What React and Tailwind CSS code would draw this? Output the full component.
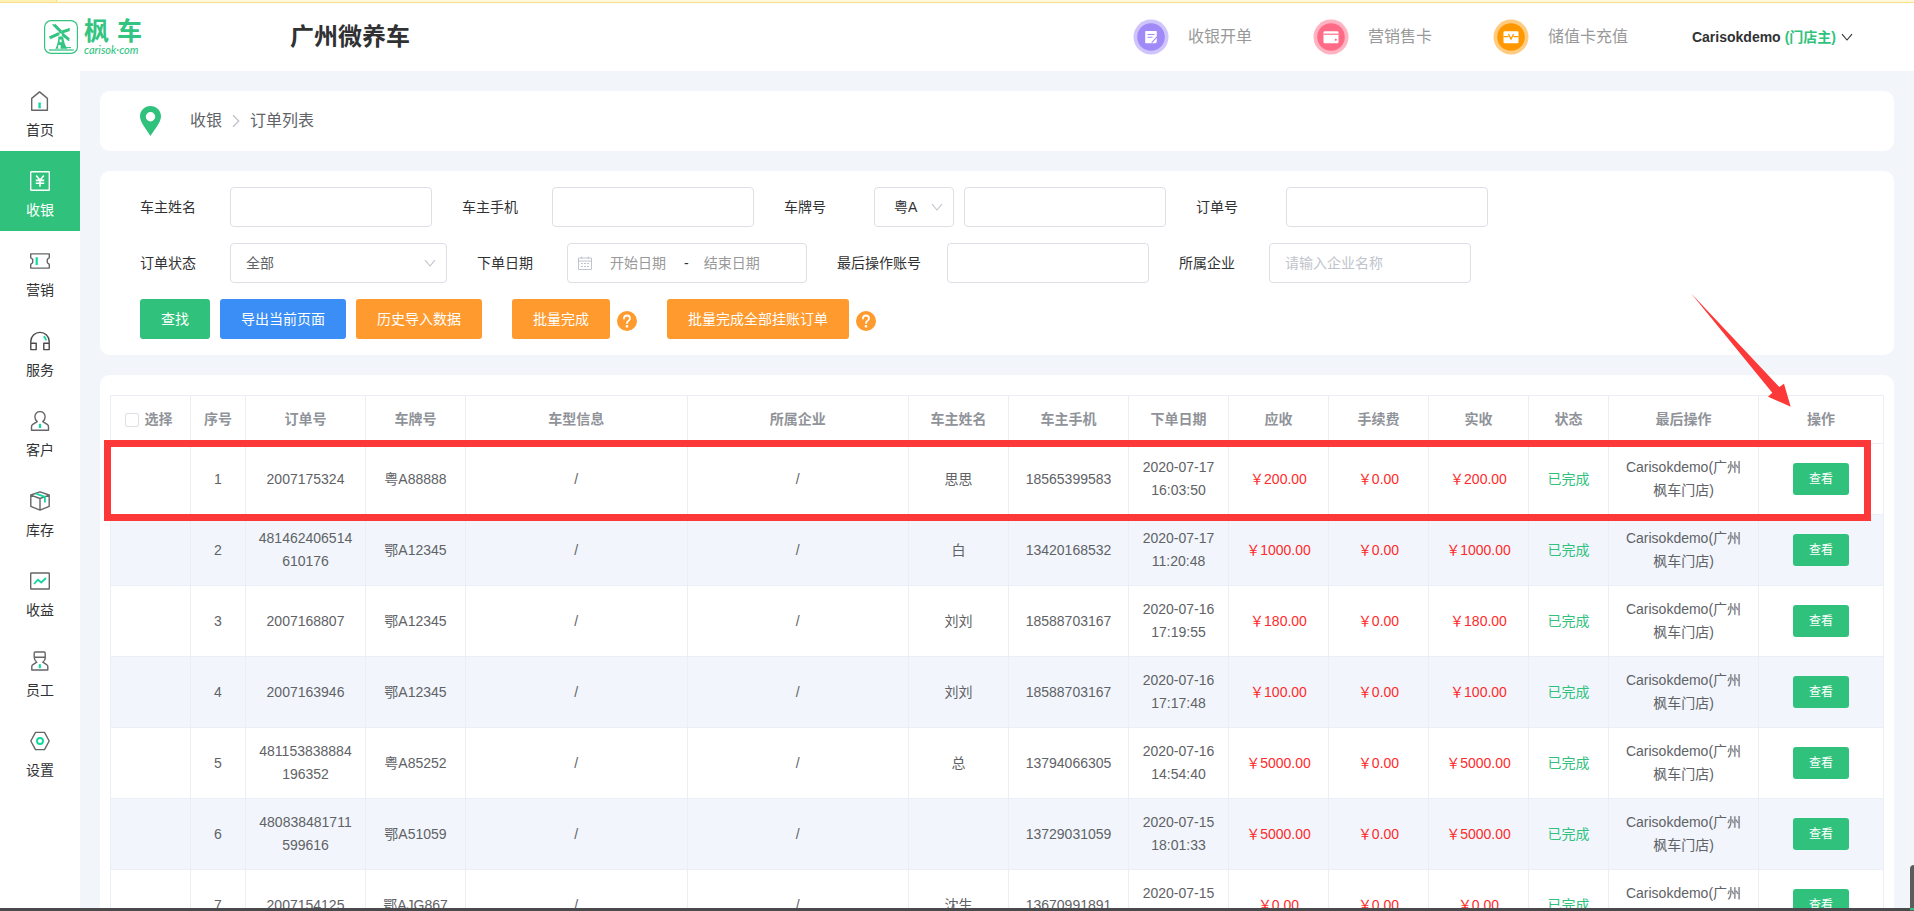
import React from "react";

const NAV = [
  { label: "首页", icon: "home" },
  { label: "收银", icon: "cash", active: true },
  { label: "营销", icon: "ticket" },
  { label: "服务", icon: "headset" },
  { label: "客户", icon: "customer" },
  { label: "库存", icon: "box" },
  { label: "收益", icon: "income" },
  { label: "员工", icon: "staff" },
  { label: "设置", icon: "settings" },
];

const ICONS = {
  home: (
    <>
      <path d="M1.7 19.2V7.4L9.6 .9l7.8 6.5v11.8z" />
      <path d="M9.6 11.5v5.8" stroke="#12d8a0" strokeWidth="2.400" />
    </>
  ),
  cash: (
    <>
      <rect x=".7" y=".7" width="18.6" height="18.6" rx=".6" stroke="#fff" />
      <path d="M6.2 4.6 10 9.2l3.8-4.6M10 9.2v6.6M5.8 9.4h8.4M5.8 12.3h8.4" stroke="#fff" strokeWidth="1.6" />
    </>
  ),
  ticket: (
    <>
      <path d="M.7 2.900h18.600v3.500c-.2 1.200-2 1.200-2 2.200v2.800c0 1 1.800 1 2 2.200v3.500H.7v-3.500c.2-1.200 2-1.200 2-2.200V8.600c0-1-1.800-1-2-2.200z" />
      <path d="M6.7 6.200v7.800" stroke="#12d8a0" strokeWidth="2.200" />
    </>
  ),
  headset: (
    <>
      <path d="M.8 18.6V10.6a9.2 9.2 0 0 1 18.4 0v8M.8 12.2h5.4v6.4H.8zM13.8 12.2h5.4v6.4h-5.4z" stroke="#4a4a4a" />
      <path d="M13.6 5.4c1.4.8 2.1 2 2.5 4" stroke="#12d8a0" strokeWidth="1.8" />
    </>
  ),
  customer: (
    <>
      <path d="M7.2 10.6C5.6 9.300 4.900 7.700 4.900 5.700a5.100 5.100 0 0 1 10.200 0c0 2-.7 3.600-2.300 4.900l4.400 2.800c.9.6 1.300 1.300 1.300 2.300v3.500h-17v-3.500c0-1 .4-1.700 1.300-2.300z" />
      <path d="M10 12.800v4.200" stroke="#12d8a0" strokeWidth="2.200" />
    </>
  ),
  box: (
    <>
      <path d="M10 .9 19.200 4v11.300L10 19.100.8 15.300V4zM.8 4.200 10 7.500l9.200-3.300M10 7.500v11.600" />
      <path d="M6 2.700 14.900 5.900v5.600" stroke="#12d8a0" strokeWidth="1.800" />
    </>
  ),
  income: (
    <>
      <rect x=".7" y="2" width="18.600" height="16" rx=".5" />
      <path d="m4 13 4-4.300 3.200 2.800L16 7" stroke="#12d8a0" strokeWidth="1.800" />
    </>
  ),
  staff: (
    <>
      <path d="M4.200 6.200V2c0-.6.4-1 1-1h9c.6 0 1 .4 1 1v4.200zM4.200 6.200c0 2.200.8 3.600 2.600 5l-3.800 2.400c-.8.5-1.200 1-1.200 2v3.400h16v-3.400c0-1-.4-1.500-1.200-2l-3.800-2.400c1.800-1.400 2.600-2.800 2.600-5" />
      <path d="M9.800 13.200v4" stroke="#12d8a0" strokeWidth="2.200" />
    </>
  ),
  settings: (
    <>
      <path d="M5.500 1.400h9L19.200 10l-4.700 8.600h-9L.8 10z" />
      <circle cx="10" cy="10" r="3" stroke="#12d8a0" strokeWidth="1.900" />
    </>
  ),
};

const ACTIONS = [
  {
    label: "收银开单",
    ring: "#cfc4fb",
    fill: "#9f8af7",
    glyph: (
      <>
        <path d="M13.200 12h9.600c.6 0 1 .4 1 1v9.600c0 .9-.7 1.600-1.600 1.600h-9c-.6 0-1-.4-1-1V13c0-.6.4-1 1-1z" fill="#fff" />
        <path d="M14.500 15.500h7M14.500 18.300h5M24.300 17.600l-5.600 6" stroke="#9f8af7" strokeWidth="1.100" fill="none" />
      </>
    ),
  },
  {
    label: "营销售卡",
    ring: "#ffb3c1",
    fill: "#ff6b87",
    glyph: (
      <>
        <rect x="10.500" y="12.200" width="15" height="12" rx="1.200" fill="#fff" />
        <path d="M10.500 15.200h15" stroke="#ff6b87" strokeWidth="1.200" />
        <circle cx="22.800" cy="20.800" r="1.100" fill="#ff6b87" />
      </>
    ),
  },
  {
    label: "储值卡充值",
    ring: "#ffcb80",
    fill: "#ff9800",
    glyph: (
      <>
        <rect x="10.500" y="12.200" width="15" height="12" rx="1.200" fill="#fff" />
        <path d="M10.500 17.600h5M20.500 17.600h5M15.400 15l2.600 5 2.600-5" stroke="#ff9800" strokeWidth="1.300" fill="none" />
      </>
    ),
  },
];

const COLUMNS = [
  { title: "选择", width: "w-[80px]" },
  { title: "序号", width: "w-[55px]" },
  { title: "订单号", width: "w-[120px]" },
  { title: "车牌号", width: "w-[100px]" },
  { title: "车型信息", width: "" },
  { title: "所属企业", width: "" },
  { title: "车主姓名", width: "w-[100px]" },
  { title: "车主手机", width: "w-[120px]" },
  { title: "下单日期", width: "w-[100px]" },
  { title: "应收", width: "w-[100px]" },
  { title: "手续费", width: "w-[100px]" },
  { title: "实收", width: "w-[100px]" },
  { title: "状态", width: "w-[80px]" },
  { title: "最后操作", width: "w-[150px]" },
  { title: "操作", width: "w-[125px]" },
];

const ORDERS = [
  { no: "2007175324", plate: "粤A88888", owner: "思思", phone: "18565399583", date: "2020-07-17", time: "16:03:50", total: "200.00" },
  { no: "481462406514610176", plate: "鄂A12345", owner: "白", phone: "13420168532", date: "2020-07-17", time: "11:20:48", total: "1000.00" },
  { no: "2007168807", plate: "鄂A12345", owner: "刘刘", phone: "18588703167", date: "2020-07-16", time: "17:19:55", total: "180.00" },
  { no: "2007163946", plate: "鄂A12345", owner: "刘刘", phone: "18588703167", date: "2020-07-16", time: "17:17:48", total: "100.00" },
  { no: "481153838884196352", plate: "粤A85252", owner: "总", phone: "13794066305", date: "2020-07-16", time: "14:54:40", total: "5000.00" },
  { no: "480838481711599616", plate: "鄂A51059", owner: "", phone: "13729031059", date: "2020-07-15", time: "18:01:33", total: "5000.00" },
  { no: "2007154125", plate: "鄂AJG867", owner: "沈生", phone: "13670991891", date: "2020-07-15", time: "17:25:10", total: "0.00" },
];

// Full-width yen sign, as used in Chinese price text
const YEN = "\uFFE5";

const INPUT = "h-10 rounded border border-[#dcdfe6] bg-white px-[15px] text-sm text-[#606266] outline-none placeholder:text-[#c0c4cc]";
const CELL = "border-r border-b border-[#ebeef5] px-3";

function Chevron({ className }) {
  return (
    <svg viewBox="0 0 12 12" className={className} fill="none" stroke="currentColor" strokeWidth="1.100" aria-hidden="true">
      <path d="M1 3.200 6 9l5-5.800" />
    </svg>
  );
}

function Field({ id, label, wide, children }) {
  return (
    <div className="flex items-center">
      <label htmlFor={id} className={wide ? "w-[110px] shrink-0" : "w-[90px] shrink-0"}>
        {label}
      </label>
      {children}
    </div>
  );
}

function Help() {
  return (
    <button type="button" aria-label="帮助" className="mt-1 flex size-5 items-center justify-center rounded-full bg-[#ff9a2e]">
      <svg viewBox="0 0 20 20" className="size-5" fill="none" stroke="#fff" strokeWidth="1.800" strokeLinecap="round">
        <path d="M7 7.600c0-1.800 1.300-3.100 3-3.100s3 1.200 3 2.900c0 2.100-2.900 2.300-3 4.700" />
        <circle cx="10" cy="15.300" r=".5" fill="#fff" />
      </svg>
    </button>
  );
}

function Button({ color, children }) {
  return (
    <button type="button" className={`h-10 rounded-[3px] px-[21px] text-sm text-white ${color}`}>
      {children}
    </button>
  );
}

function Logo() {
  return (
    <a href="#home" className="flex items-center gap-1.5 text-[#33c481]">
      <svg viewBox="0 0 34 34" className="size-[34px]" aria-hidden="true">
        <rect x=".6" y=".6" width="32.800" height="32.800" rx="6.500" fill="none" stroke="currentColor" strokeWidth="1.200" />
        <g fill="none" stroke="currentColor">
          <path d="M8.600 4.200 25.300 20.700M5.300 17.200 26 8.600" strokeWidth="1.200" />
          <path d="M10.200 4.800 17 11.800M5.800 17.800 15 13.600M18 12l7.400-2.400M18.400 14.200l6.600 5.400" strokeWidth="3" />
          <path d="M5 30h24.600" strokeWidth="1.300" />
          <path d="M21.500 27.600h5.500" strokeWidth="1.100" />
        </g>
        <path d="M14.400 16.600h4.800c.3 4 1.800 8.400 4 12.200H11.400c2-3.600 2.900-7.800 3-12.200z" fill="currentColor" />
        <path d="M15.600 19.400h2v2.800h-2zM14.200 25h2.400v3.800h-2.400z" fill="#fff" />
      </svg>
      <span className="flex flex-col">
        <span className="flex gap-2 text-[25px] leading-[26px] font-bold">
          <span>枫</span>
          <span>车</span>
        </span>
        <span className="font-[Lato,sans-serif] text-[11px] leading-3 font-medium italic">carisok·com</span>
      </span>
    </a>
  );
}

function Header() {
  return (
    <header className="flex h-[68px] shrink-0 items-center bg-white pr-[61px] pl-11">
      <div className="w-[246px] shrink-0">
        <Logo />
      </div>
      <h1 className="text-2xl font-bold text-[#303133]">广州微养车</h1>
      <nav className="ml-auto flex items-center gap-[61px]">
        {ACTIONS.map((a) => (
          <a key={a.label} href="#action" className="flex items-center gap-[19px] text-base text-[#999]">
            <svg viewBox="0 0 36 36" className="size-9" aria-hidden="true">
              <circle cx="18" cy="18" r="17.500" fill={a.ring} />
              <circle cx="18" cy="18" r="13.800" fill={a.fill} />
              {a.glyph}
            </svg>
            {a.label}
          </a>
        ))}
      </nav>
      <button type="button" className="ml-16 flex items-center gap-1 text-sm font-bold text-[#303133]">
        Carisokdemo <span className="text-[#30c27c]">(门店主)</span>
        <Chevron className="ml-px size-3" />
      </button>
    </header>
  );
}

function Sidebar() {
  return (
    <nav className="w-20 shrink-0 bg-white">
      {NAV.map((n) => (
        <a
          key={n.label}
          href="#nav"
          className={`flex h-20 flex-col items-center gap-[9px] pt-5 text-sm ${n.active ? "bg-[#30c27c] text-white" : "text-[#303133]"}`}
        >
          <svg viewBox="0 0 20 20" className="size-5" fill="none" stroke="#666" strokeWidth="1.400" strokeLinejoin="round" aria-hidden="true">
            {ICONS[n.icon]}
          </svg>
          {n.label}
        </a>
      ))}
    </nav>
  );
}

function Breadcrumb() {
  return (
    <div className="flex h-[60px] items-center rounded-[10px] bg-white px-10 text-base text-[#606266]">
      <svg viewBox="0 0 22 30" className="mr-7 h-[30px] w-[22px]" aria-hidden="true">
        <path fillRule="evenodd" d="M10.500 0C16.300 0 21 4.600 21 10.300 21 17 14 24 10.500 30 7 24 0 17 0 10.300 0 4.600 4.700 0 10.500 0zm0 6a4.700 4.700 0 1 0 0 9.400 4.700 4.700 0 0 0 0-9.400z" fill="#30c27c" />
      </svg>
      <a href="#cashier">收银</a>
      <svg viewBox="0 0 28 14" className="h-3.5 w-7" fill="none" stroke="#c0c4cc" strokeWidth="1.300" aria-hidden="true">
        <path d="m11 1.200 5.800 5.800L11 12.800" />
      </svg>
      <span>订单列表</span>
    </div>
  );
}

function Filters() {
  return (
    <form className="flex flex-col gap-4 rounded-[10px] bg-white px-10 py-4 text-sm text-[#303133]">
      <div className="flex flex-wrap gap-[30px]">
        <Field id="owner" label="车主姓名">
          <input id="owner" className={`w-[202px] ${INPUT}`} />
        </Field>
        <Field id="phone" label="车主手机">
          <input id="phone" className={`w-[202px] ${INPUT}`} />
        </Field>
        <Field id="plate" label="车牌号">
          <div className="relative mr-2.5">
            <select aria-label="车牌前缀" className="h-10 w-20 appearance-none rounded border border-[#dcdfe6] bg-white pl-[19px] text-sm">
              <option>粤A</option>
            </select>
            <Chevron className="pointer-events-none absolute top-3.5 right-[11px] size-3 text-[#c0c4cc]" />
          </div>
          <input id="plate" className={`w-[202px] ${INPUT}`} />
        </Field>
        <Field id="order" label="订单号">
          <input id="order" className={`w-[202px] ${INPUT}`} />
        </Field>
      </div>
      <div className="flex flex-wrap gap-[30px]">
        <Field id="status" label="订单状态">
          <div className="relative">
            <select id="status" className={`w-[217px] appearance-none ${INPUT}`}>
              <option>全部</option>
            </select>
            <Chevron className="pointer-events-none absolute top-3.5 right-[11px] size-3 text-[#c0c4cc]" />
          </div>
        </Field>
        <Field id="start" label="下单日期">
          <div className="flex h-10 w-[240px] items-center rounded border border-[#dcdfe6] px-2.5">
            <svg viewBox="0 0 14 14" className="size-3.5 shrink-0" fill="none" stroke="#c0c4cc" strokeWidth="1" aria-hidden="true">
              <path d="M.5 2h13v11.500H.5zM.5 5h13M3.700.5v2.500M10.300.5v2.500M3 7.500h2M6 7.500h2M9 7.500h2M3 10.500h2M6 10.500h2M9 10.500h2" />
            </svg>
            <input id="start" placeholder="开始日期" className="w-[92px] text-center outline-none placeholder:text-[#999]" />
            <span>-</span>
            <input aria-label="结束日期" placeholder="结束日期" className="w-[86px] text-center outline-none placeholder:text-[#999]" />
          </div>
        </Field>
        <Field id="account" label="最后操作账号" wide>
          <input id="account" className={`w-[202px] ${INPUT}`} />
        </Field>
        <Field id="company" label="所属企业">
          <input id="company" placeholder="请输入企业名称" className={`w-[202px] ${INPUT}`} />
        </Field>
      </div>
      <div className="flex flex-wrap items-center gap-[30px]">
        <div className="flex gap-2.5">
          <Button color="bg-[#30c27c]">查找</Button>
          <Button color="bg-[#3a8ef6]">导出当前页面</Button>
          <Button color="bg-[#ff9a2e]">历史导入数据</Button>
        </div>
        <div className="flex items-center gap-[7px]">
          <Button color="bg-[#ff9a2e]">批量完成</Button>
          <Help />
        </div>
        <div className="flex items-center gap-[7px]">
          <Button color="bg-[#ff9a2e]">批量完成全部挂账订单</Button>
          <Help />
        </div>
      </div>
    </form>
  );
}

function Orders() {
  return (
    <section className="relative rounded-t-[10px] bg-white px-2.5 pt-5">
      <div className="relative">
        <table className="w-full table-fixed border-separate border-spacing-0 border-t border-l border-[#ebeef5] text-center text-sm leading-[23px] text-[#606266]">
          <thead>
            <tr className="text-[#909399]">
              {COLUMNS.map((c, i) => (
                <th key={c.title} className={`h-12 border-r border-b border-[#ebeef5] font-bold ${c.width}`}>
                  {i === 0 ? (
                    <label className="flex items-center justify-center gap-1.5 pr-1">
                      <input type="checkbox" className="size-3.5 appearance-none rounded-[2px] border border-[#dcdfe6] bg-white" />
                      {c.title}
                    </label>
                  ) : (
                    c.title
                  )}
                </th>
              ))}
            </tr>
          </thead>
          <tbody>
            {ORDERS.map((o, i) => (
              <tr key={o.no} className={`h-[71px] ${i % 2 ? "bg-[#f2f6fc]" : "bg-white"}`}>
                <td className={CELL}></td>
                <td className={CELL}>{i + 1}</td>
                <td className={`${CELL} break-all`}>{o.no}</td>
                <td className={CELL}>{o.plate}</td>
                <td className={CELL}>/</td>
                <td className={CELL}>/</td>
                <td className={CELL}>{o.owner}</td>
                <td className={CELL}>{o.phone}</td>
                <td className={CELL}>
                  {o.date} {o.time}
                </td>
                <td className={`${CELL} text-[#fd2b2b]`}>{YEN + o.total}</td>
                <td className={`${CELL} text-[#fd2b2b]`}>{YEN + "0.00"}</td>
                <td className={`${CELL} text-[#fd2b2b]`}>{YEN + o.total}</td>
                <td className={`${CELL} text-[#30c27c]`}>已完成</td>
                <td className={`${CELL} break-all`}>Carisokdemo(广州枫车门店)</td>
                <td className={CELL}>
                  <button type="button" className="h-8 w-14 rounded-[3px] bg-[#30c27c] align-middle text-xs text-white">
                    查看
                  </button>
                </td>
              </tr>
            ))}
          </tbody>
        </table>
        <div className="pointer-events-none absolute top-[45px] right-[13px] -left-1.5 h-[81px] border-[7px] border-[#fd3838]" />
      </div>
      <svg viewBox="0 0 102 116" className="pointer-events-none absolute -top-[83px] right-[102px] h-[116px] w-[102px]" aria-hidden="true">
        <path d="M1 1.300 89.300 95l4.700-3.300 6.700 23L78 104.700l4.300-4z" fill="#fd3838" />
      </svg>
    </section>
  );
}

export default function App() {
  return (
    <div className="relative flex h-screen flex-col overflow-hidden bg-[#f2f6fb] font-['Liberation_Sans','Noto_Sans_CJK_SC',sans-serif]">
      <div className="flex h-[3px] shrink-0 border-b border-[#fbe08a] bg-[#fff9dc]">
        <div className="w-[57px] border-r border-[#fbe08a] bg-[#fff0b3]" />
      </div>
      <Header />
      <div className="flex min-h-0 flex-1">
        <Sidebar />
        <main className="flex min-w-0 flex-1 flex-col gap-5 overflow-hidden px-5 pt-5 *:shrink-0">
          <Breadcrumb />
          <Filters />
          <Orders />
        </main>
      </div>
      <div className="h-[3px] shrink-0 bg-[#4a4a4d]" />
      <div className="absolute right-0 bottom-0 flex h-[46px] w-1 flex-col justify-end rounded-tl bg-[#5c5c5c]">
        <div className="mb-px h-0.5 bg-[#30c27c]" />
      </div>
    </div>
  );
}
